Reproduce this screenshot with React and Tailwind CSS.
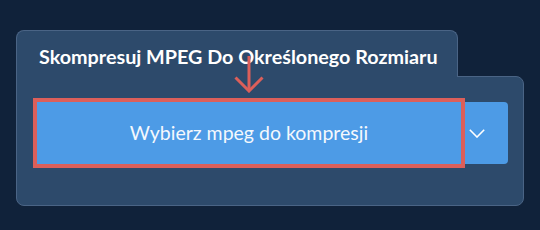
import React from "react";

function DownArrow() {
  return (
    <svg
      className="absolute left-[218px] top-[26px] z-20"
      width="30"
      height="37"
      viewBox="0 0 30 37"
      fill="none"
      stroke="#dc5f5a"
      strokeWidth="3"
    >
      <path d="M15 0 V35" />
      <path d="M1.5 21.5 L15 35 L28.5 21.5" />
    </svg>
  );
}

function Chevron() {
  return (
    <svg width="16" height="9" viewBox="0 0 16 9" fill="none" stroke="white" strokeWidth="1.6">
      <path d="M0.8 0.8 L8 8 L15.2 0.8" />
    </svg>
  );
}

export default function App() {
  return (
    <div
      className="min-h-[230px] w-[540px] bg-[#10223a] pl-4 pt-[30px]"
      style={{ fontFamily: "Lato, 'Open Sans', sans-serif" }}
    >
      <div className="relative w-[508px]">
        <DownArrow />

        {/* Tab */}
        <div className="relative z-10 -mb-px h-[47px] w-[442px] rounded-t-lg border border-b-0 border-[#4a6485] bg-[#2d4a6b] pl-[22px] pt-[13px]">
          <h1 className="text-[19.75px] font-bold leading-[25px] text-white">
            Skompresuj MPEG Do Określonego Rozmiaru
          </h1>
        </div>

        {/* Panel */}
        <div className="h-[130px] rounded-b-lg rounded-tr-lg border border-[#4a6485] bg-[#2d4a6b] pl-5 pr-[15px] pt-[25px]">
          <div className="flex h-[62px]">
            <button className="relative z-10 flex w-[424px] items-center justify-center bg-[#4d9be6] text-[19.5px] text-[#f4f8fd] outline-4 outline-[#dc5f5a]">
              Wybierz mpeg do kompresji
            </button>
            <button className="flex flex-1 items-center rounded-r bg-[#4d9be6] pl-2">
              <Chevron />
            </button>
          </div>
        </div>
      </div>
    </div>
  );
}
